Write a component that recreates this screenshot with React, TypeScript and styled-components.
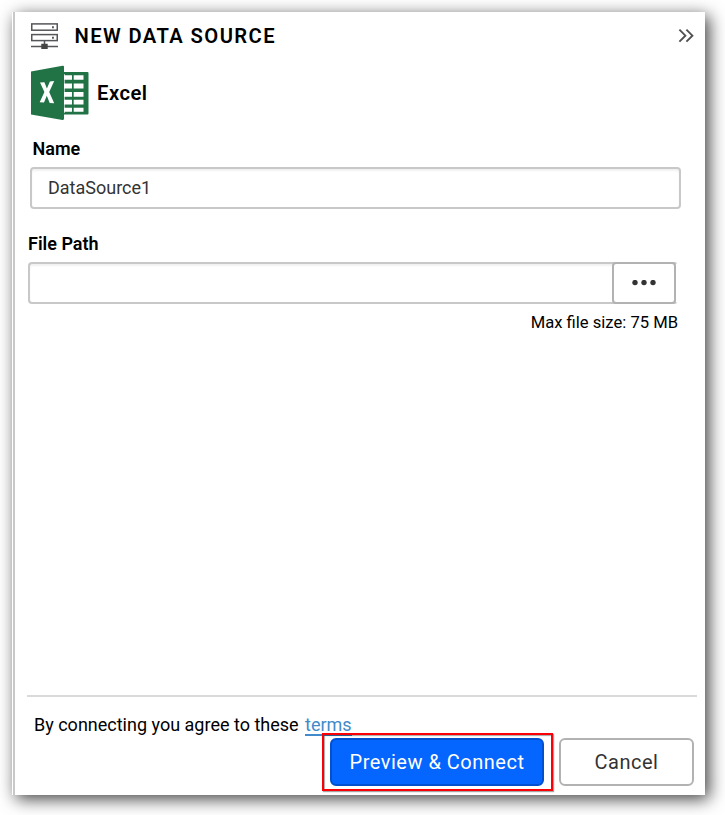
import React from "react";
import styled, { createGlobalStyle } from "styled-components";

const GlobalStyle = createGlobalStyle`
  * { box-sizing: border-box; }
  body {
    margin: 0;
    background: #fff;
    color: #000;
    font-family: Roboto, "Liberation Sans", sans-serif;
  }
`;

const Page = styled.main`
  width: 725px;
  height: 815px;
  padding: 12px 20px 20px 12px;
  overflow: hidden;
`;

const Panel = styled.section`
  height: 783px;
  display: flex;
  flex-direction: column;
  padding-left: 1px;
  background: #fff;
  box-shadow: 4px 4px 16px rgba(0, 0, 0, 0.75);
`;

const PanelBody = styled.div`
  flex: 1;
  display: flex;
  flex-direction: column;
  border-left: 2px solid #c8c8c8;
`;

const Header = styled.header`
  height: 48px;
  display: flex;
  align-items: center;
  padding: 0 11px 0 16px;
`;

const Title = styled.h1`
  flex: 1;
  margin: 0 0 0 15.5px;
  font-size: 20.2px;
  line-height: 24px;
  font-weight: 600;
  letter-spacing: 1.4px;
`;

const CollapseButton = styled.button`
  display: flex;
  padding: 0;
  border: 0;
  background: none;
`;

const SourceType = styled.div`
  height: 66px;
  display: flex;
  align-items: center;
  gap: 8px;
  margin-bottom: 12px;
  padding-left: 16px;
  font-size: 20.2px;
  font-weight: 600;
  letter-spacing: 0.5px;
`;

const Field = styled.div<{ $inset: number; $width: number }>`
  width: ${(p) => p.$width}px;
  margin-left: ${(p) => p.$inset}px;
  height: 95px;
`;

const Label = styled.label<{ $indent?: number }>`
  display: block;
  height: 29px;
  padding-left: ${(p) => p.$indent ?? 0}px;
  font-size: 18px;
  line-height: 21px;
  font-weight: 600;
`;

const inputFrame = `
  height: 42px;
  border: 2px solid #c8c8c8;
  border-radius: 4px;
  background: #fff;
  box-shadow: inset 0 2px 2px rgba(0, 0, 0, 0.06);
`;

const TextInput = styled.input`
  ${inputFrame}
  display: block;
  width: 100%;
  padding: 0 16px 1px;
  color: #333;
  font: 400 18px Roboto, sans-serif;
  outline: none;
`;

const FileInput = styled.div`
  ${inputFrame}
  display: flex;
  justify-content: flex-end;
  border-right-color: transparent;
`;

const BrowseButton = styled.button`
  width: 64px;
  height: 42px;
  margin: -2px 0;
  display: flex;
  align-items: center;
  justify-content: center;
  padding: 0;
  border: 2px solid #b2b2b2;
  border-radius: 4px;
  background: #fff;
`;

const SizeHint = styled.p`
  width: 663px;
  margin: -16px 0 0;
  font-size: 16.6px;
  line-height: 22px;
  text-align: right;
`;

const Footer = styled.footer`
  height: 100px;
  margin: auto 8px 0 12px;
  border-top: 2px solid #dadada;
`;

const Agreement = styled.p`
  height: 36px;
  margin: 0;
  padding: 17px 0 0 7px;
  font-size: 18px;
  line-height: 21px;
`;

const TermsLink = styled.a`
  display: inline-block;
  height: 22px;
  margin-left: 2px;
  border-bottom: 2px solid #428bca;
  color: #428bca;
  text-decoration: none;
`;

const Actions = styled.div`
  display: flex;
  justify-content: flex-end;
  align-items: center;
  gap: 6px;
  padding-right: 3px;
`;

const Highlight = styled.div`
  position: relative;
  height: 58px;
  padding: 3px 7px 3px 6px;
  border: 2px solid #fb0007;
  box-shadow: 1px 1px 1px rgba(0, 0, 0, 0.35), inset 1px 1px 1px rgba(0, 0, 0, 0.35);
`;

const Button = styled.button<{ $primary?: boolean }>`
  width: ${(p) => (p.$primary ? 214 : 135)}px;
  height: 48px;
  padding: 0;
  border: 2px solid ${(p) => (p.$primary ? "#0050cf" : "#b2b2b2")};
  border-radius: 6px;
  background: ${(p) => (p.$primary ? "#0565ff" : "#fff")};
  color: ${(p) => (p.$primary ? "#fff" : "#333")};
  font: 400 20px Roboto, sans-serif;
  letter-spacing: 0.5px;
`;

const ServerIcon = () => (
  <svg width="28" height="28" viewBox="0 0 28 28" fill="none" stroke="#55565a" strokeWidth="1.5">
    <rect x="0.75" y="1.9" width="25.5" height="6.3" />
    <rect x="0.75" y="12.6" width="25.5" height="6" />
    <path d="M13.5 18.5v4M0 24.4h27" />
    <path d="M10.3 21.8h6.4v5.1h-6.4z" fill="#444" stroke="none" />
    <path d="M21 5.3h1.9M21 15.8h1.9" strokeWidth="1.9" />
  </svg>
);

const ExcelIcon = () => (
  <svg width="58" height="56" viewBox="0 0 58 56">
    <path fill="#217346" d="M0 6.5 31.5.8q1.5-.3 1.5 1v52q0 1.4-1.5 1.1L0 49.5z" />
    <path fill="#217346" d="M33 7h23.5q1 0 1 1v40.5q0 1-1 1H33z" />
    <path
      fill="#fff"
      d="M33 10.2h8v4.6h-8zM42.7 10.2h9.8v4.6h-9.8zM33 18.6h8v4.8h-8zM42.7 18.6h9.8v4.8h-9.8zM33 26.9h8v4.8h-8zM42.7 26.9h9.8v4.8h-9.8zM33 34.8h8v4.8h-8zM42.7 34.8h9.8v4.8h-9.8zM33 42.8h8v4h-8zM42.7 42.8h9.8v4h-9.8z"
    />
    <path d="M33.5 9v39" stroke="#fff" strokeWidth="1" opacity=".6" />
    <path fill="#fff" d="m9 17.5 4.4-.3 2.5 6.4 3-7.2 4.3-.3-5 11 5 11.2-4.5-.3-2.9-7.2-2.8 6.7-4.3-.2 4.7-10.2z" />
  </svg>
);

const CollapseIcon = () => (
  <svg width="16" height="14" viewBox="0 0 16 14" fill="none" stroke="#505050" strokeWidth="1.9">
    <path d="m1.4 .7 6 6-6 6M8.4 .7l6 6-6 6" />
  </svg>
);

const DotsIcon = () => (
  <svg width="24" height="6" viewBox="0 0 24 6" fill="#333">
    <circle cx="3" cy="2.6" r="2.7" />
    <circle cx="12" cy="2.6" r="2.7" />
    <circle cx="21" cy="2.6" r="2.7" />
  </svg>
);

export default function App() {
  return (
    <Page>
      <GlobalStyle />
      <Panel>
        <PanelBody>
          <Header>
            <ServerIcon />
            <Title>NEW DATA SOURCE</Title>
            <CollapseButton aria-label="Collapse">
              <CollapseIcon />
            </CollapseButton>
          </Header>
          <SourceType>
            <ExcelIcon />
            Excel
          </SourceType>
          <Field $inset={15} $width={651}>
            <Label $indent={2.5} htmlFor="name">Name</Label>
            <TextInput id="name" defaultValue="DataSource1" />
          </Field>
          <Field $inset={13} $width={650}>
            <Label>File Path</Label>
            <FileInput>
              <BrowseButton aria-label="Browse">
                <DotsIcon />
              </BrowseButton>
            </FileInput>
          </Field>
          <SizeHint>Max file size: 75 MB</SizeHint>
          <Footer>
            <Agreement>
              By connecting you agree to these <TermsLink>terms</TermsLink>
            </Agreement>
            <Actions>
              <Highlight>
                <Button $primary>Preview &amp; Connect</Button>
              </Highlight>
              <Button>Cancel</Button>
            </Actions>
          </Footer>
        </PanelBody>
      </Panel>
    </Page>
  );
}
